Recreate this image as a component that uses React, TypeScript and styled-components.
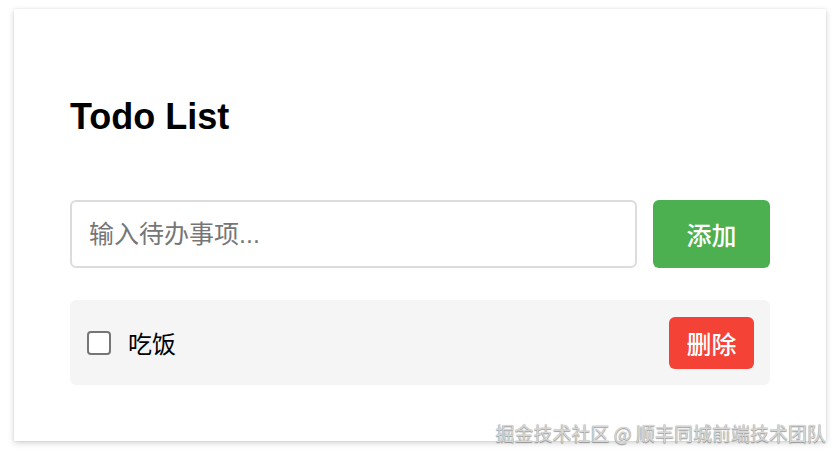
import React, { useState } from "react";
import styled, { createGlobalStyle } from "styled-components";

const Global = createGlobalStyle`
  html, body { margin: 0; padding: 0; background: #ffffff; }
  body { font-family: "Liberation Sans", "Noto Sans CJK SC", Arial, sans-serif; }
  * { box-sizing: border-box; }
`;

const Page = styled.div`
  position: relative;
  width: 840px;
  height: 458px;
  padding: 9px 14px 0 14px;
`;

const Card = styled.div`
  width: 812px;
  background: #ffffff;
  padding: 56px;
  box-shadow: 0 2px 6px rgba(0, 0, 0, 0.18), 0 0 1px rgba(0, 0, 0, 0.15);
`;

const Title = styled.h1`
  margin: 34px 0 65px 0;
  font-size: 36px;
  line-height: 36px;
  font-weight: 700;
  color: #000;
  font-family: "Liberation Sans", Arial, sans-serif;
`;

const InputRow = styled.div`
  display: flex;
  gap: 16px;
  height: 68px;
`;

const TextInput = styled.input`
  flex: 1;
  height: 68px;
  border: 2px solid #dcdcdc;
  border-radius: 6px;
  padding: 0 17px;
  font-size: 25px;
  font-family: "Liberation Sans", "Noto Sans CJK SC", sans-serif;
  color: #222;
  outline: none;
  &::placeholder { color: #767676; }
`;

const Button = styled.button<{ $bg: string; $w: number; $h: number }>`
  width: ${(p) => p.$w}px;
  height: ${(p) => p.$h}px;
  border: none;
  border-radius: 6px;
  background: ${(p) => p.$bg};
  color: #fff;
  font-size: 25px;
  font-weight: 500;
  font-family: "Noto Sans CJK SC", sans-serif;
  padding: 0;
  cursor: pointer;
  flex-shrink: 0;
`;

const List = styled.ul`
  list-style: none;
  margin: 32px 0 0 0;
  padding: 0;
`;

const Item = styled.li`
  display: flex;
  align-items: center;
  height: 85px;
  padding: 0 16px 0 17px;
  background: #f5f5f5;
  border-radius: 6px;
`;

const Check = styled.input`
  appearance: none;
  width: 24px;
  height: 24px;
  margin: 0;
  border: 2px solid #767676;
  border-radius: 4px;
  background: #fff;
  flex-shrink: 0;
`;

const ItemText = styled.span`
  flex: 1;
  margin-left: 17px;
  font-size: 24px;
  font-family: "Noto Sans CJK SC", sans-serif;
  color: #000;
`;

const Watermark = styled.div`
  position: absolute;
  right: 14px;
  top: 420px;
  font-size: 19px;
  line-height: 26px;
  font-family: "Noto Sans CJK SC", sans-serif;
  color: #d6d6d6;
  text-shadow: 0 1px 1px rgba(0, 0, 0, 0.35), 0 0 1px rgba(0, 0, 0, 0.3);
  white-space: nowrap;
`;

export default function App() {
  const [todos] = useState([{ id: 1, text: "吃饭" }]);
  return (
    <Page>
      <Global />
      <Card>
        <Title>Todo List</Title>
        <InputRow>
          <TextInput placeholder="输入待办事项..." />
          <Button $bg="#4caf50" $w={117} $h={68}>添加</Button>
        </InputRow>
        <List>
          {todos.map((t) => (
            <Item key={t.id}>
              <Check type="checkbox" />
              <ItemText>{t.text}</ItemText>
              <Button $bg="#f44336" $w={85} $h={52}>删除</Button>
            </Item>
          ))}
        </List>
      </Card>
      <Watermark>掘金技术社区 @ 顺丰同城前端技术团队</Watermark>
    </Page>
  );
}
